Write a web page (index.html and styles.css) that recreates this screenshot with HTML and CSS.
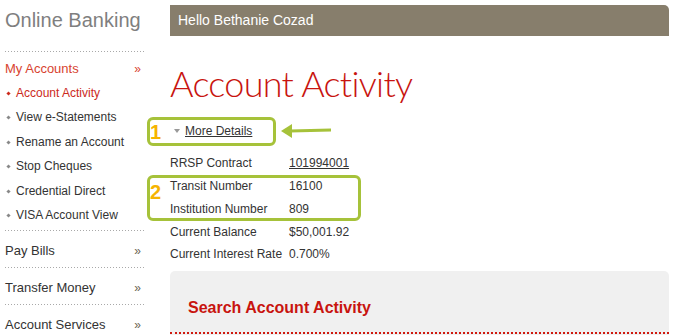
FILE: index.html
```html
<!DOCTYPE html>
<html lang="en">
<head>
  <meta charset="UTF-8">
  <title>Account Activity</title>
  <link rel="stylesheet" href="styles.css">
</head>
<body>

<div class="page">
  <!-- menu de gauche -->
  <aside class="sidebar">
    <div class="brand">Online Banking</div>

    <div class="nav-group open">
      <div class="nav-head"><span>My Accounts</span><span class="chev">&raquo;</span></div>
      <ul class="sub-nav">
        <li class="active">Account Activity</li>
        <li>View e-Statements</li>
        <li>Rename an Account</li>
        <li>Stop Cheques</li>
        <li>Credential Direct</li>
        <li>VISA Account View</li>
      </ul>
    </div>
    <div class="nav-group">
      <div class="nav-head"><span>Pay Bills</span><span class="chev">&raquo;</span></div>
    </div>
    <div class="nav-group">
      <div class="nav-head"><span>Transfer Money</span><span class="chev">&raquo;</span></div>
    </div>
    <div class="nav-group">
      <div class="nav-head"><span>Account Services</span><span class="chev">&raquo;</span></div>
    </div>
  </aside>

  <main class="content">
    <div class="greeting">Hello Bethanie Cozad</div>

    <h1>Account Activity</h1>

    <div class="details">
      <a class="more" href="#"><span class="caret"></span>More Details</a>

      <div class="info">
        <span>RRSP Contract</span><span><a href="#">101994001</a></span>
        <span>Transit Number</span><span>16100</span>
        <span>Institution Number</span><span>809</span>
        <span>Current Balance</span><span>$50,001.92</span>
        <span>Current Interest Rate</span><span>0.700%</span>
      </div>

      <!-- annotations -->
      <div class="mark mark-one"><b>1</b></div>
      <svg class="arrow" width="52" height="18" viewBox="0 0 52 18">
        <line x1="50" y1="8" x2="9" y2="9" stroke="#a6c23a" stroke-width="3"/>
        <polygon points="0,9 11,2 11,16" fill="#a6c23a"/>
      </svg>
      <div class="mark mark-two"><b>2</b></div>
    </div>

    <section class="search-panel">
      <h2>Search Account Activity</h2>
    </section>
  </main>
</div>

</body>
</html>
```

FILE: styles.css
```css
body {
  margin: 0;
  font-family: "Liberation Sans", Arial, sans-serif;
  color: #333;
  background: #fff;
}

.page {
  display: flex;
  gap: 25px;
  height: 335px;
  overflow: hidden;
}

/* sidebar */
.sidebar {
  width: 140px;
  flex-shrink: 0;
  padding-left: 5px;
}

.brand {
  font-size: 20px;
  line-height: 24px;
  color: #7f7f7f;
  padding: 8px 0 20px;
}

.brand,
.nav-group {
  background-image: linear-gradient(to right, #a9a9a9 1px, transparent 1px);
  background-size: 3px 1px;
  background-repeat: repeat-x;
  background-position: left bottom;
}

.nav-group {
  padding-bottom: 1px;
}

.nav-head {
  display: flex;
  justify-content: space-between;
  font-size: 13px;
  line-height: 16px;
  padding: 12px 4px 8px 0;
  color: #333;
}

.nav-head .chev {
  font-size: 12px;
  color: #6b6450;
}

.open .nav-head {
  padding-top: 9px;
  padding-bottom: 0;
  color: #d8432f;
}

.open .nav-head .chev {
  color: #d8432f;
}

.sub-nav {
  list-style: none;
  margin: 4px 0 0;
  padding: 0 0 3px;
}

.sub-nav li {
  position: relative;
  font-size: 12px;
  line-height: 24.4px;
  padding-left: 11px;
  color: #333;
}

.sub-nav li::before {
  content: "";
  position: absolute;
  left: 2px;
  top: 11px;
  width: 3px;
  height: 3px;
  background: #888;
  transform: rotate(45deg);
}

.sub-nav li.active {
  color: #cc2a1c;
}

.sub-nav li.active::before {
  background: #cc2a1c;
}

/* main */
.content {
  width: 499px;
}

.greeting {
  margin-top: 5px;
  height: 31px;
  line-height: 31px;
  padding-left: 8px;
  font-size: 14px;
  color: #fff;
  background: #877e6c;
  border-radius: 0 5px 0 0;
}

h1 {
  font-family: Lato, "Open Sans", sans-serif;
  font-weight: 300;
  font-size: 36px;
  letter-spacing: -0.7px;
  line-height: 48px;
  color: #c8140f;
  margin: 23px 0 0 0;
}

.details {
  position: relative;
  margin-top: 14px;
}

.more {
  display: inline-block;
  font-size: 12px;
  line-height: 16px;
  color: #333;
  margin-left: 4px;
}

.caret {
  display: inline-block;
  width: 0;
  height: 0;
  border-left: 3px solid transparent;
  border-right: 3px solid transparent;
  border-top: 4px solid #999;
  margin-right: 5px;
  vertical-align: 2px;
}

.info {
  display: grid;
  grid-template-columns: 119px auto;
  grid-auto-rows: 22.75px;
  align-items: center;
  font-size: 12px;
  margin-top: 13px;
}

.info a {
  color: #333;
}

.mark {
  position: absolute;
  left: -23px;
  border: 3px solid #a6c23a;
  border-radius: 6px;
  box-sizing: border-box;
}

.mark b {
  position: absolute;
  left: 0;
  font-size: 20px;
  line-height: 20px;
  color: #f6b400;
}

.mark-one {
  top: -4px;
  width: 129px;
  height: 29px;
}

.mark-one b {
  top: 2px;
}

.mark-two {
  top: 54px;
  width: 214px;
  height: 46px;
}

.mark-two b {
  top: 4px;
}

.arrow {
  position: absolute;
  left: 111px;
  top: 1px;
}

.search-panel {
  margin-top: 5px;
  background: #f0f0f0;
  border-radius: 5px 5px 0 0;
  height: 200px;
}

.search-panel h2 {
  margin: 0;
  padding: 27px 0 14px 18px;
  font-size: 16px;
  line-height: 20px;
  color: #c8140f;
  border-bottom: 2px dotted #d01a10;
}
```
